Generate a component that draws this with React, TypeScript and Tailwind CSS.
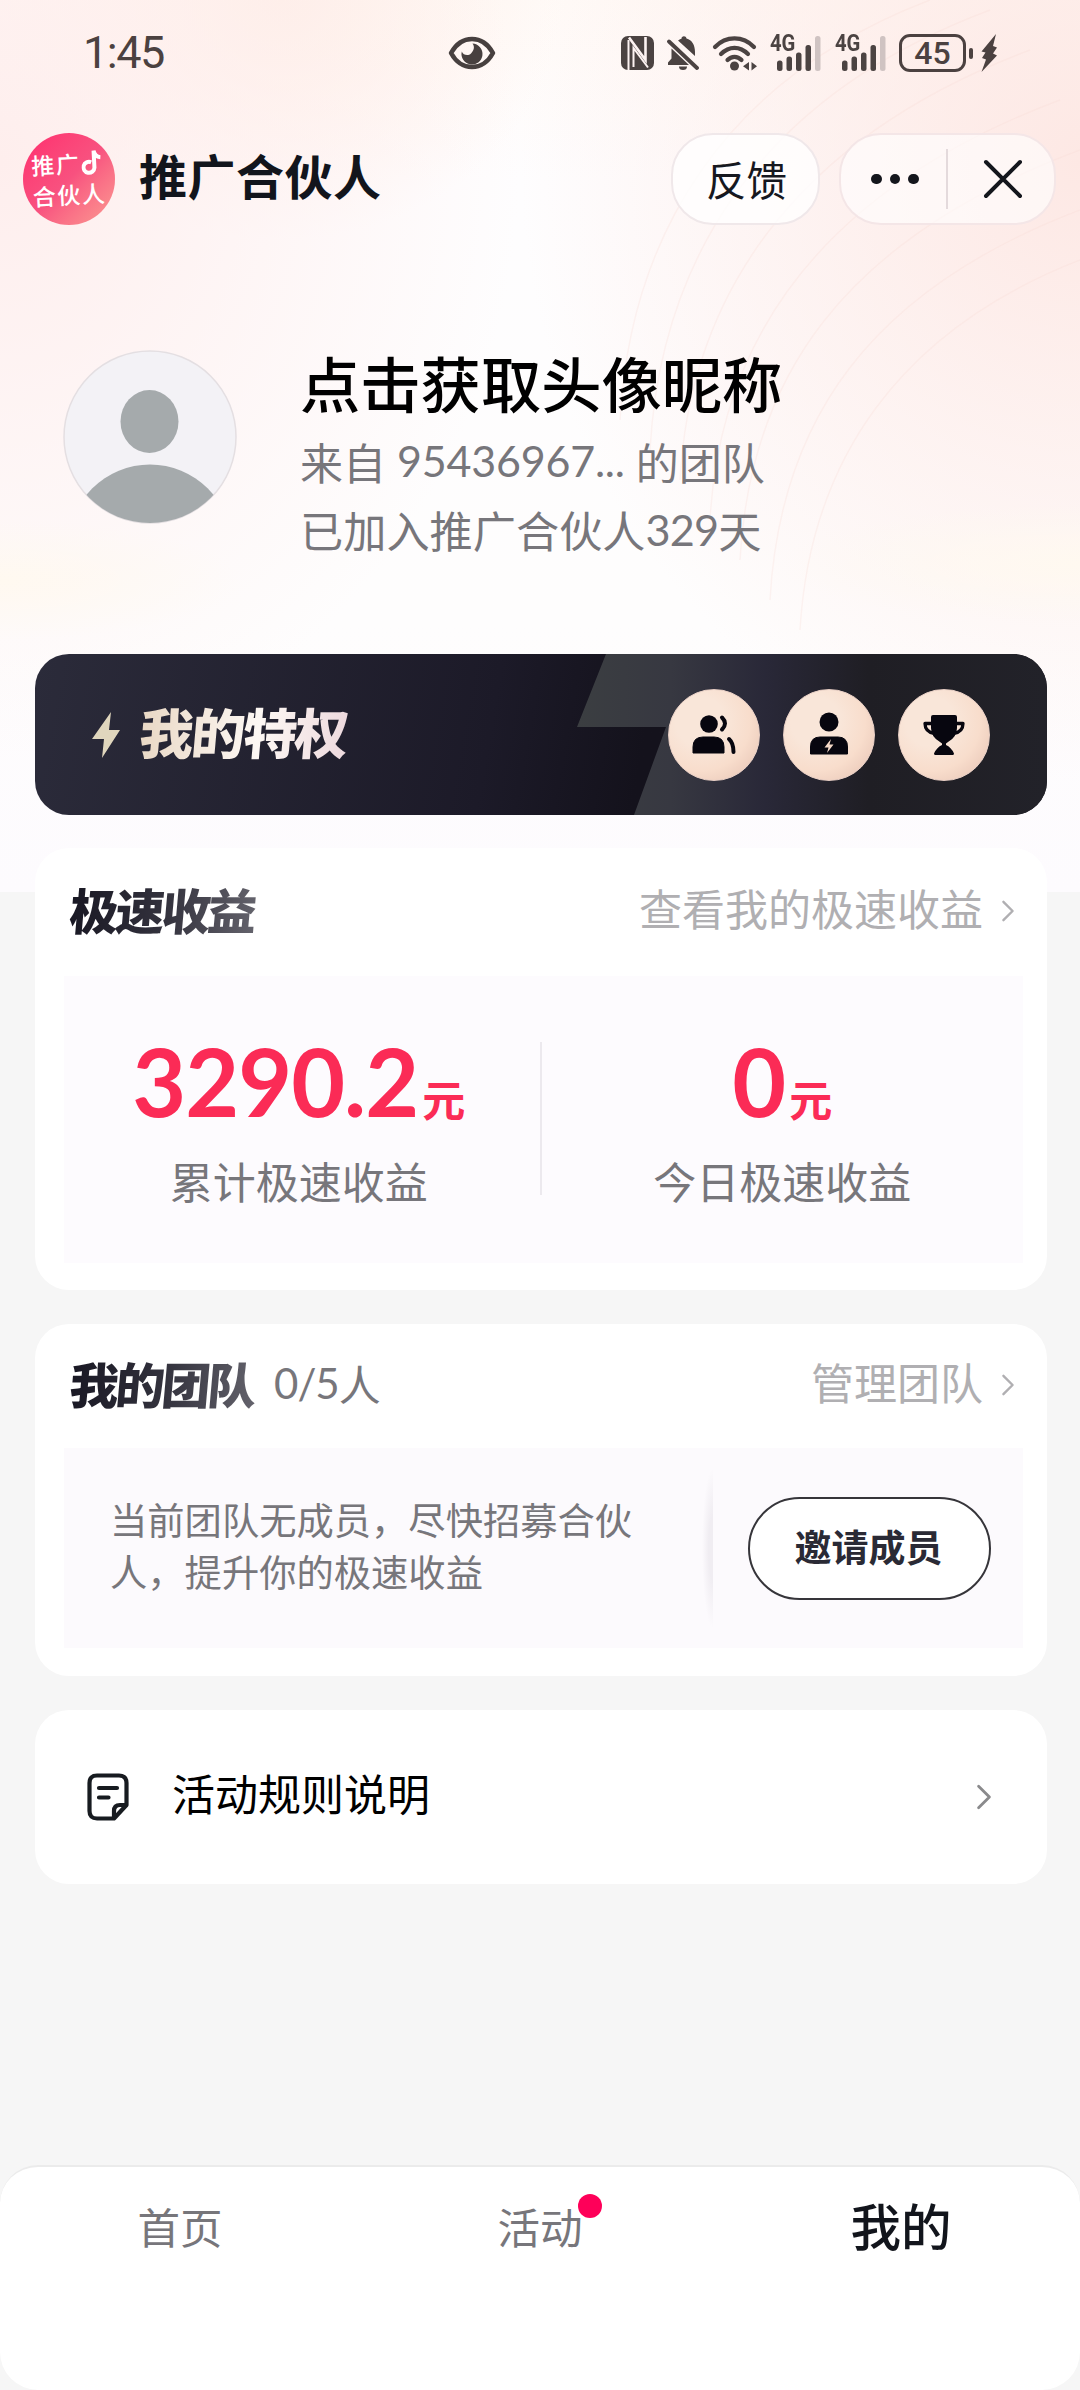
import React from "react";

const cjk = "font-['Noto_Sans_CJK_SC','Noto_Sans',sans-serif]";
const num = "font-['Lato','Roboto',sans-serif]";

function Eye() {
  return (
    <svg className="h-[34px] w-[48px]" viewBox="0 0 48 34" fill="none">
      <path d="M3 17C8 8 15 3 24 3s16 5 21 14c-5 9-12 14-21 14S8 26 3 17Z" stroke="#47403f" strokeWidth="4.500" strokeLinejoin="round" />
      <path d="M24.500 7.500A10.500 10.500 0 1 1 13.800 15.500C15 19 20 20.500 23 17.500c3-3 4-7 1.500-10Z" fill="#47403f" />
    </svg>
  );
}

function Nfc() {
  return (
    <svg className="h-[34px] w-[33px]" viewBox="0 0 33 34">
      <rect x="0" y="0" width="33" height="34" rx="7" fill="#4b4342" />
      <path d="M7.500 34V4" fill="none" stroke="#fdf3f2" strokeWidth="2" />
      <path d="M8 1.500 24.500 24V1" fill="none" stroke="#fdf3f2" strokeWidth="2.600" />
      <path d="M12.500 31V12L27 31.500" fill="none" stroke="#fdf3f2" strokeWidth="2" />
    </svg>
  );
}

function BellOff() {
  return (
    <svg className="h-[36px] w-[32px]" viewBox="0 0 32 36" fill="#4b4342">
      <path d="M11 5.500c1.300-1 2.700-1.600 3.500-1.800C14 1 19 0 19.500 3.500 25 5 28 10 28 17v4Z" />
      <path d="M4.500 13.500 22 30H1v-2.500l3.500-4Z" />
      <path d="M2 6.500 30 33" stroke="#4b4342" strokeWidth="3.800" strokeLinecap="round" />
      <path d="M12 31.500h8a4 3.500 0 0 1-8 0Z" />
    </svg>
  );
}

function Wifi() {
  return (
    <svg className="h-[36px] w-[45px]" viewBox="0 0 45 36" fill="none" stroke="#4b4342" strokeWidth="4.200" strokeLinecap="round">
      <path d="M3 12C14 .500 31 .500 42 12" />
      <path d="M9 19c8-8.300 19-8.300 27 0" />
      <path d="M15.500 25c4-4.300 10-4.300 14 0" />
      <circle cx="22.500" cy="31" r="4.500" fill="#4b4342" stroke="none" />
      <path d="M37 27v8.500l-6-4.200ZM39.500 27v8.500l5.500-4.200Z" fill="#4b4342" stroke="none" />
    </svg>
  );
}

function Signal() {
  return (
    <div className="relative h-[36px] w-[51px]">
      <span className="absolute left-0 top-[-1px] origin-left scale-x-[.88] font-['Roboto',sans-serif] text-[23px] font-bold leading-[20px] text-[#4b4342]">4G</span>
      <svg className="h-[36px] w-[51px]" viewBox="0 0 51 36" fill="#4b4342">
        <rect x="7" y="25.500" width="5.500" height="10.500" rx="2.500" />
        <rect x="16.500" y="21.500" width="5.500" height="14.500" rx="2.500" />
        <rect x="26" y="17.500" width="5.500" height="18.500" rx="2.500" />
        <rect x="35.500" y="10" width="5.500" height="26" rx="2.500" />
        <rect x="45" y="1" width="5.500" height="35" rx="2.500" fill="#cfc3c2" />
      </svg>
    </div>
  );
}

function StatusBar() {
  return (
    <div className="flex h-[104px] items-center pl-[83px] pr-[82px] pt-[2px]">
      <span className="w-[365px] font-['Roboto',sans-serif] text-[45px] leading-[50px] tracking-[-1.500px] text-[#4b4140]">1:45</span>
      <Eye />
      <div className="ml-auto flex items-center gap-[13px]">
        <Nfc />
        <BellOff />
        <Wifi />
        <div className="flex gap-[14px]">
          <Signal />
          <Signal />
        </div>
        <div className="flex items-center">
          <span className="flex h-[38px] w-[67px] items-center justify-center rounded-[11px] border-[3px] border-[#4b4140] font-['Roboto',sans-serif] text-[32px] font-medium leading-none text-[#4b4140]">45</span>
          <span className="ml-[3px] h-[11px] w-[4px] rounded-full bg-[#4b4140]" />
          <svg className="ml-[7px] h-[38px] w-[18px]" viewBox="0 0 18 38" fill="#4b4140">
            <path d="M16 0 1.500 17.500 5.500 18.500 2 24l4 1.500L1.500 38 17 21.500l-4-2 4-6-4-1.500Z" />
          </svg>
        </div>
      </div>
    </div>
  );
}

function Logo() {
  return (
    <div className="flex h-[92px] w-[92px] shrink-0 items-center rounded-full bg-linear-135 from-[#ff2b6e] via-[#f8517f] to-[#fa9a92] pl-[9px] text-white">
      <p className="-rotate-3 whitespace-nowrap text-[23px] font-medium leading-[31px] tracking-[1.500px]">
        推广
        <svg className="ml-[1px] inline-block h-[26px] w-[20px] align-[-4px]" viewBox="0 0 20 26" fill="none" stroke="#fff" strokeWidth="4">
          <path d="M10 12.500a5.500 5.500 0 1 0 3 5.500V1c.600 4 3 6.500 6.500 7" />
        </svg>
        <br />
        合伙人
      </p>
    </div>
  );
}

function Header() {
  return (
    <header className="mt-[29px] flex h-[92px] items-center pl-[23px] pr-[24px]">
      <Logo />
      <h1 className="ml-[24px] -translate-y-[5px] text-[48px] font-bold leading-[60px] tracking-[0.500px] text-[#12151c]">推广合伙人</h1>
      <button className="ml-auto flex h-[92px] w-[149px] items-center justify-center rounded-[42px] border-2 border-[#f0e8ea] bg-white/80 text-[40.500px] leading-none text-[#16181f]">
        <span className="translate-x-[1px]">反馈</span>
      </button>
      <div className="ml-[19px] flex h-[92px] w-[217px] items-center rounded-[42px] border-2 border-[#f4e6e7] bg-white/60">
        <div className="flex flex-1 justify-center gap-[8px] pl-[3px]">
          <i className="h-[10.500px] w-[10.500px] rounded-full bg-[#14161c]" />
          <i className="h-[10.500px] w-[10.500px] rounded-full bg-[#14161c]" />
          <i className="h-[10.500px] w-[10.500px] rounded-full bg-[#14161c]" />
        </div>
        <span className="h-[60px] w-[2px] bg-[#e4dadc]" />
        <div className="flex flex-1 justify-center pl-[5px]">
          <svg className="h-[40px] w-[40px]" viewBox="0 0 40 40" stroke="#14161c" strokeWidth="4" strokeLinecap="round">
            <path d="M3 3l34 34M37 3 3 37" />
          </svg>
        </div>
      </div>
    </header>
  );
}

function Profile() {
  return (
    <section className="mt-[125px] flex h-[304px] pl-[63px]">
      <svg className="h-[174px] w-[174px]" viewBox="0 0 174 174">
        <defs>
          <clipPath id="avatar">
            <circle cx="87" cy="87" r="86" />
          </clipPath>
        </defs>
        <circle cx="87" cy="87" r="86" fill="#f3f2f6" stroke="#e4dfe2" strokeWidth="1.500" />
        <ellipse cx="86.500" cy="71.500" rx="29" ry="31.500" fill="#a5aaac" />
        <circle cx="87" cy="196" r="81.500" fill="#a5aaac" clipPath="url(#avatar)" />
      </svg>
      <div className="ml-[63px]">
        <h2 className="text-[60.300px] font-medium leading-[64px] text-black">点击获取头像昵称</h2>
        <p className="mt-[13px] flex whitespace-pre text-[43px] leading-[68px] text-[#77767b]">
          <span>来自</span>
          <span className={`${num} ml-[11px] mr-[11px] tracking-[-0.200px]`}>95436967...</span>
          <span>的团队</span>
        </p>
        <p className="flex text-[43.200px] leading-[68px] text-[#77767b]">
          已加入推广合伙人<span className={`${num} tracking-[-0.800px]`}>329</span>天
        </p>
      </div>
    </section>
  );
}

function Coin({ children }: { children: React.ReactNode }) {
  return (
    <div className="flex h-[92px] w-[92px] items-center justify-center rounded-full border border-[#e9d0c6] bg-[radial-gradient(circle_at_35%_35%,#f9e6d9_30%,#f8ddcc_60%,#e3bfb0_100%)]">
      <svg className="h-[48px] w-[48px]" viewBox="0 0 48 48" fill="#07060f">
        {children}
      </svg>
    </div>
  );
}

function Privileges() {
  return (
    <section className="relative ml-[35px] mr-[33px] h-[161px] overflow-hidden rounded-[34px] bg-linear-100 from-[#2b2b3a] via-[#1c1a28] via-45% to-[#14121c] to-60%">
      <svg className="absolute inset-0 h-full w-full" viewBox="0 0 1012 161">
        <defs>
          <linearGradient id="bolt" x1="542" y1="0" x2="1012" y2="0" gradientUnits="userSpaceOnUse">
            <stop offset="0" stopColor="#3b3e41" />
            <stop offset=".2" stopColor="#373841" />
            <stop offset=".4" stopColor="#292838" />
            <stop offset=".62" stopColor="#1f1e24" />
            <stop offset="1" stopColor="#222229" />
          </linearGradient>
        </defs>
        <path d="M571 0H1012V161H599L631 73H542Z" fill="url(#bolt)" />
      </svg>
      <div className="relative flex h-full items-center px-[57px]">
        <svg className="h-[46px] w-[28px]" viewBox="0 0 28 46" fill="#e0d6bd">
          <path d="M19 0 0 27h12l-2 19 18-28H17Z" />
        </svg>
        <h3 className="ml-[20px] -translate-y-[4px] -skew-x-[5deg] bg-linear-to-r from-[#e9d8c5] via-[#fdf8f4] via-55% to-[#ecd7dc] bg-clip-text pr-[8px] text-[54px] font-black leading-[70px] tracking-[-2.300px] text-transparent">我的特权</h3>
        <div className="ml-auto flex gap-[23px]">
          <Coin>
            <circle cx="19" cy="13" r="8.800" />
            <path d="M3 42V36Q3 26 13 26H24Q34 26 34 36V42Z" stroke="#07060f" strokeLinejoin="round" />
            <path d="M32 6.500Q38 12.500 32 18.500M39 28Q43.500 32 43.500 41" fill="none" stroke="#07060f" strokeWidth="4" strokeLinecap="round" />
          </Coin>
          <Coin>
            <circle cx="24" cy="11" r="9.500" />
            <path d="M5.500 43V36Q5.500 26 15 26H33Q42.500 26 42.500 36V43Z" stroke="#07060f" strokeLinejoin="round" />
            <path d="M26 28 19.500 36.500h4l-1.500 5.500 6.500-8.500h-4Z" fill="#f5d9c8" />
          </Coin>
          <Coin>
            <path d="M13 4H35Q37 4 37 6V17Q37 26 28 31L26 32.500v1.500q5 2 8 8.500 0 1.500-1.500 1.500h-17Q14 44 14 42.500q3-6.500 8-8.500v-1.500L20 31Q11 26 11 17V6Q11 4 13 4Z" />
            <path d="M11 12.500H5Q5 20.500 14 22.500M37 12.500h6Q43 20.500 34 22.500" fill="none" stroke="#07060f" strokeWidth="3.300" strokeLinejoin="round" />
          </Coin>
        </div>
      </div>
    </section>
  );
}

function Chevron({ className }: { className: string }) {
  return (
    <svg className={className} viewBox="0 0 14 24" fill="none" stroke="currentColor" strokeLinecap="round" strokeLinejoin="round" strokeWidth="2.600">
      <path d="M2 2l10 10L2 22" />
    </svg>
  );
}

function CardHeading({ title, extra, link }: { title: string; extra?: React.ReactNode; link: string }) {
  return (
    <div className="flex h-[60px] items-center pl-[35px] pr-[32px]">
      <h3 className="-translate-y-[2px] -skew-x-[5deg] bg-linear-to-r from-[#191824] via-[#33323d] to-[#66656e] bg-clip-text pr-[6px] text-[49px] font-black leading-[60px] tracking-[-3px] text-transparent">{title}</h3>
      {extra}
      <span className="ml-auto flex items-center text-[43px] leading-[60px] text-[#b0afb2]">
        <span className="-translate-y-[4px]">{link}</span>
        <Chevron className="ml-[18px] h-[22px] w-[14px]" />
      </span>
    </div>
  );
}

function Stat({ value, label }: { value: string; label: string }) {
  return (
    <div className="flex flex-1 flex-col items-center text-[#fb2b56]">
      <div className="flex h-[90px] items-baseline">
        <span className={`${num} text-[93px] font-bold leading-[90px] tracking-[-1px]`}>{value}</span>
        <span className="ml-[4px] text-[43px] font-bold leading-[60px]">元</span>
      </div>
      <div className="mt-[24px] text-[43px] leading-[60px] text-[#77767b]">{label}</div>
    </div>
  );
}

function Earnings() {
  return (
    <section className="ml-[35px] mr-[33px] mt-[33px] h-[442px] rounded-[34px] bg-white pt-[33px]">
      <CardHeading title="极速收益" link="查看我的极速收益" />
      <div className="ml-[29px] mr-[24px] mt-[35px] flex h-[287px] bg-[#fdfbfe] pt-[60px]">
        <div className="-ml-[6px] flex flex-1">
          <Stat value="3290.2" label="累计极速收益" />
        </div>
        <span className="mt-[6px] h-[153px] w-[2px] bg-[#ece9ee]" />
        <div className="flex flex-1">
          <Stat value="0" label="今日极速收益" />
        </div>
      </div>
    </section>
  );
}

function Team() {
  return (
    <section className="ml-[35px] mr-[33px] mt-[34px] h-[352px] rounded-[34px] bg-white pt-[31px]">
      <CardHeading
        title="我的团队"
        link="管理团队"
        extra={
          <span className="ml-[14px] flex -translate-y-[2px] text-[42px] leading-[60px] text-[#77767b]">
            <span className={`${num} tracking-[-1px]`}>0/5</span>人
          </span>
        }
      />
      <div className="ml-[29px] mr-[24px] mt-[33px] flex h-[200px] items-center bg-[#fcfafd]">
        <p className="ml-[46px] w-[530px] -translate-y-[3px] text-[37.300px] leading-[52px] text-[#77767b]">
          当前团队无成员，尽快招募合伙
          <br />
          人，提升你的极速收益
        </p>
        <span className="ml-[62px] h-[160px] w-[11px] bg-[radial-gradient(ellipse_100%_50%_at_100%_50%,#f0edf2_40%,transparent)]" />
        <button className="ml-[35px] flex h-[103px] w-[243px] items-center justify-center rounded-full border-[2.500px] border-[#36353a] bg-white text-[37px] font-bold leading-none text-[#2a2a35]">
          <span className="-translate-x-[1px] -translate-y-[2px]">邀请成员</span>
        </button>
      </div>
    </section>
  );
}

function Rules() {
  return (
    <section className="ml-[35px] mr-[33px] mt-[34px] flex h-[174px] items-center rounded-[34px] bg-white pl-[52px] pr-[55px]">
      <svg className="h-[48px] w-[42px]" viewBox="0 0 42 48" fill="none" stroke="#171b20" strokeWidth="4.200" strokeLinecap="round" strokeLinejoin="round">
        <path d="M10 2.500H32Q39.500 2.500 39.500 10V32L27 45.500H10Q2.500 45.500 2.500 38V10Q2.500 2.500 10 2.500Z" />
        <path d="M27 44V38Q27 32 33 32H38.500M12 15H30M12 24.500H21.500" />
      </svg>
      <span className="ml-[43px] -translate-y-[5px] text-[43px] leading-[60px] text-black">活动规则说明</span>
      <Chevron className="ml-auto h-[26px] w-[16px] text-[#8a8a8c]" />
    </section>
  );
}

function TabBar() {
  return (
    <nav className="mt-auto flex h-[225px] rounded-[38px] border-t-2 border-[#ebebeb] bg-white pt-[27px] text-center text-[42.500px] leading-[64px] text-[#77767b]">
      <span className="flex-1">首页</span>
      <span className="flex-1">
        <span className="relative">
          活动
          <i className="absolute -right-[19px] top-[-1px] h-[24px] w-[24px] rounded-full bg-[#fe0059]" />
        </span>
      </span>
      <span className="flex-1 -translate-y-[2px] translate-x-[1px] text-[50.500px] font-medium text-[#12151c]">我的</span>
    </nav>
  );
}

function Backdrop() {
  return (
    <div className="absolute inset-x-0 top-0 h-[892px] bg-[#fdfbfe]">
      <div className="absolute inset-0 bg-[radial-gradient(ellipse_520px_600px_at_0%_18%,#feeeed,transparent),radial-gradient(ellipse_280px_240px_at_26%_0%,#feefe8,transparent),radial-gradient(ellipse_560px_620px_at_100%_18%,#fde8e4,transparent),linear-gradient(to_bottom,#fffaf7,#fefdfe_20%,#fefdfd_70%,#fdfbfe)]" />
      <div className="absolute inset-x-0 top-[500px] h-[160px] bg-[radial-gradient(ellipse_240px_60px_at_0%_50%,#fff9f0,transparent),radial-gradient(ellipse_300px_60px_at_100%_40%,#fff9f0,transparent)]" />
      <svg className="absolute right-0 top-0 h-[640px] w-[480px] opacity-25" viewBox="0 0 480 640" fill="none" stroke="#f7d9d3" strokeWidth="1.500">
        <path d="M20 420C30 240 120 80 330 0M50 450C60 270 150 100 390 10M80 480C90 300 190 140 430 50M110 520C120 340 220 190 460 100M140 560C150 380 240 240 480 150M170 600C180 420 270 290 480 210M200 630C210 460 300 330 480 260" />
      </svg>
    </div>
  );
}

export default function App() {
  return (
    <div className={`relative h-[2390px] w-[1080px] overflow-hidden bg-[#f6f6f6] ${cjk}`}>
      <Backdrop />
      <main className="relative flex h-full flex-col">
        <StatusBar />
        <Header />
        <Profile />
        <Privileges />
        <Earnings />
        <Team />
        <Rules />
        <TabBar />
      </main>
    </div>
  );
}
